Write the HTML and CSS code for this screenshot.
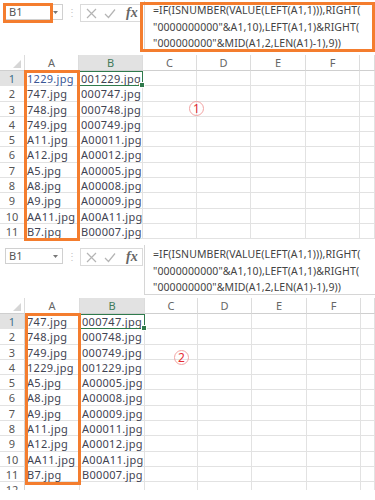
FILE: index.html
```html
<!DOCTYPE html>
<html>
<head>
<meta charset="utf-8">
<link rel="stylesheet" href="styles.css">
</head>
<body>
<div class="panel panel-a">
  <div class="toolbar">
    <div class="namebox"><span>B1</span><svg class="arrow" width="5" height="3" viewBox="0 0 5 3"><path d="M0 0h5L2.5 3z" fill="#777"/></svg></div>
    <div class="dots">⋮</div>
    <div class="btns">
      <svg width="11" height="11" viewBox="0 0 11 11"><path d="M1 1L10 10M10 1L1 10" stroke="#b4b4b4" stroke-width="1.2" fill="none"/></svg>
      <svg width="12" height="11" viewBox="0 0 12 11"><path d="M1 6L4.5 9.5L11 1.5" stroke="#b4b4b4" stroke-width="1.2" fill="none"/></svg>
      <span class="fx">fx</span>
    </div>
    <div class="formula">
      <div>=IF(ISNUMBER(VALUE(LEFT(A1,1))),RIGHT(</div>
      <div>"0000000000"&amp;A1,10),LEFT(A1,1)&amp;RIGHT(</div>
      <div>"000000000"&amp;MID(A1,2,LEN(A1)-1),9))</div>
    </div>
  </div>
  <div class="sheet">
    <div class="ch corner"><svg width="8" height="8" viewBox="0 0 8 8"><path d="M8 0V8H0z" fill="#d6d6d6"/></svg></div><div class="ch">A</div><div class="ch on">B</div><div class="ch">C</div><div class="ch">D</div><div class="ch">E</div><div class="ch">F</div><div class="ch"></div>
    <div class="rh on">1</div><div class="c blue">1229.jpg</div><div class="c sel">001229.jpg</div><div class="c"></div><div class="c"></div><div class="c"></div><div class="c"></div><div class="c"></div>
    <div class="rh">2</div><div class="c">747.jpg</div><div class="c">000747.jpg</div><div class="c"></div><div class="c"></div><div class="c"></div><div class="c"></div><div class="c"></div>
    <div class="rh">3</div><div class="c">748.jpg</div><div class="c">000748.jpg</div><div class="c"></div><div class="c"></div><div class="c"></div><div class="c"></div><div class="c"></div>
    <div class="rh">4</div><div class="c">749.jpg</div><div class="c">000749.jpg</div><div class="c"></div><div class="c"></div><div class="c"></div><div class="c"></div><div class="c"></div>
    <div class="rh">5</div><div class="c">A11.jpg</div><div class="c">A00011.jpg</div><div class="c"></div><div class="c"></div><div class="c"></div><div class="c"></div><div class="c"></div>
    <div class="rh">6</div><div class="c">A12.jpg</div><div class="c">A00012.jpg</div><div class="c"></div><div class="c"></div><div class="c"></div><div class="c"></div><div class="c"></div>
    <div class="rh">7</div><div class="c">A5.jpg</div><div class="c">A00005.jpg</div><div class="c"></div><div class="c"></div><div class="c"></div><div class="c"></div><div class="c"></div>
    <div class="rh">8</div><div class="c">A8.jpg</div><div class="c">A00008.jpg</div><div class="c"></div><div class="c"></div><div class="c"></div><div class="c"></div><div class="c"></div>
    <div class="rh">9</div><div class="c">A9.jpg</div><div class="c">A00009.jpg</div><div class="c"></div><div class="c"></div><div class="c"></div><div class="c"></div><div class="c"></div>
    <div class="rh">10</div><div class="c">AA11.jpg</div><div class="c">A00A11.jpg</div><div class="c"></div><div class="c"></div><div class="c"></div><div class="c"></div><div class="c"></div>
    <div class="rh">11</div><div class="c">B7.jpg</div><div class="c">B00007.jpg</div><div class="c"></div><div class="c"></div><div class="c"></div><div class="c"></div><div class="c"></div>
  </div>
  <div class="mark mark-name"></div>
  <div class="mark mark-formula"></div>
  <div class="mark mark-col-a1"></div>
  <div class="circ circ-1">1</div>
</div>

<div class="panel panel-b">
  <div class="toolbar">
    <div class="namebox"><span>B1</span><svg class="arrow" width="5" height="3" viewBox="0 0 5 3"><path d="M0 0h5L2.5 3z" fill="#777"/></svg></div>
    <div class="dots">⋮</div>
    <div class="btns">
      <svg width="11" height="11" viewBox="0 0 11 11"><path d="M1 1L10 10M10 1L1 10" stroke="#b4b4b4" stroke-width="1.2" fill="none"/></svg>
      <svg width="12" height="11" viewBox="0 0 12 11"><path d="M1 6L4.5 9.5L11 1.5" stroke="#b4b4b4" stroke-width="1.2" fill="none"/></svg>
      <span class="fx">fx</span>
    </div>
    <div class="formula">
      <div>=IF(ISNUMBER(VALUE(LEFT(A1,1))),RIGHT(</div>
      <div>"0000000000"&amp;A1,10),LEFT(A1,1)&amp;RIGHT(</div>
      <div>"000000000"&amp;MID(A1,2,LEN(A1)-1),9))</div>
    </div>
  </div>
  <div class="sheet sheet-b">
    <div class="ch corner"><svg width="8" height="8" viewBox="0 0 8 8"><path d="M8 0V8H0z" fill="#d6d6d6"/></svg></div><div class="ch">A</div><div class="ch on">B</div><div class="ch">C</div><div class="ch">D</div><div class="ch">E</div><div class="ch">F</div><div class="ch"></div>
    <div class="rh on">1</div><div class="c">747.jpg</div><div class="c sel">000747.jpg</div><div class="c"></div><div class="c"></div><div class="c"></div><div class="c"></div><div class="c"></div>
    <div class="rh">2</div><div class="c">748.jpg</div><div class="c">000748.jpg</div><div class="c"></div><div class="c"></div><div class="c"></div><div class="c"></div><div class="c"></div>
    <div class="rh">3</div><div class="c">749.jpg</div><div class="c">000749.jpg</div><div class="c"></div><div class="c"></div><div class="c"></div><div class="c"></div><div class="c"></div>
    <div class="rh">4</div><div class="c">1229.jpg</div><div class="c">001229.jpg</div><div class="c"></div><div class="c"></div><div class="c"></div><div class="c"></div><div class="c"></div>
    <div class="rh">5</div><div class="c">A5.jpg</div><div class="c">A00005.jpg</div><div class="c"></div><div class="c"></div><div class="c"></div><div class="c"></div><div class="c"></div>
    <div class="rh">6</div><div class="c">A8.jpg</div><div class="c">A00008.jpg</div><div class="c"></div><div class="c"></div><div class="c"></div><div class="c"></div><div class="c"></div>
    <div class="rh">7</div><div class="c">A9.jpg</div><div class="c">A00009.jpg</div><div class="c"></div><div class="c"></div><div class="c"></div><div class="c"></div><div class="c"></div>
    <div class="rh">8</div><div class="c">A11.jpg</div><div class="c">A00011.jpg</div><div class="c"></div><div class="c"></div><div class="c"></div><div class="c"></div><div class="c"></div>
    <div class="rh">9</div><div class="c">A12.jpg</div><div class="c">A00012.jpg</div><div class="c"></div><div class="c"></div><div class="c"></div><div class="c"></div><div class="c"></div>
    <div class="rh">10</div><div class="c">AA11.jpg</div><div class="c">A00A11.jpg</div><div class="c"></div><div class="c"></div><div class="c"></div><div class="c"></div><div class="c"></div>
    <div class="rh">11</div><div class="c">B7.jpg</div><div class="c">B00007.jpg</div><div class="c"></div><div class="c"></div><div class="c"></div><div class="c"></div><div class="c"></div>
    <div class="rh">12</div><div class="c"></div><div class="c"></div><div class="c"></div><div class="c"></div><div class="c"></div><div class="c"></div><div class="c"></div>
  </div>
  <div class="mark mark-col-a2"></div>
  <div class="circ circ-2">2</div>
</div>
</body>
</html>
```

FILE: styles.css
```css
* { box-sizing: border-box; }
html, body { margin: 0; padding: 0; background: #fff; }
body {
  width: 375px;
  height: 500px;
  overflow: hidden;
  font-family: "Noto Sans", "Open Sans", sans-serif;
  font-size: 11px;
  color: #444;
}
.panel { position: relative; overflow: hidden; }
.panel-a { height: 241px; }
.panel-b { height: 249px; }

.toolbar {
  display: flex;
  align-items: flex-start;
  height: 55px;
  padding-top: 1px;
}
.panel-b .toolbar { height: 57px; padding-top: 4px; }

.namebox {
  margin: 3px 0 0 5px;
  width: 58px;
  height: 16px;
  border: 1px solid #d0d0d0;
  display: flex;
  align-items: center;
  justify-content: space-between;
  padding: 0 4px 0 3px;
  color: #555;
  font-size: 11px;
  line-height: 14px;
}
.arrow { display: block; }
.dots {
  width: 17px;
  text-align: center;
  margin-top: 4px;
  color: #c4c4c4;
  font-size: 10px;
  line-height: 14px;
}
.btns {
  margin-top: 3px;
  width: 63px;
  height: 18px;
  border: 1px solid #dadada;
  display: flex;
  align-items: center;
  gap: 7px;
  padding-left: 5px;
}
.btns svg { display: block; }
.fx {
  font-family: "Liberation Serif", serif;
  font-style: italic;
  font-weight: bold;
  font-size: 14px;
  color: #666;
  margin-left: 3px;
  line-height: 14px;
}
.formula {
  flex: 1;
  height: 50px;
  margin-left: 1px;
  border-left: 1px solid #d6d6d6;
  border-bottom: 1px solid #d6d6d6;
  padding: 1px 0 0 8px;
  font-size: 10.5px;
  letter-spacing: 0.1px;
  line-height: 16.5px;
  color: #444;
  white-space: nowrap;
  overflow: hidden;
}

.sheet {
  display: grid;
  grid-template-columns: 25px 54px 64px 54px 54px 55px 54px 1fr;
  grid-template-rows: 16px repeat(11, 15.3px);
}
.sheet-b {
  grid-template-columns: 25px 55px 65px 53px 54px 55px 54px 1fr;
  grid-template-rows: 16px repeat(12, 15.3px);
}
.ch {
  border-right: 1px solid #dcdcdc;
  border-bottom: 1px solid #cfcfcf;
  text-align: center;
  color: #666;
  font-size: 11px;
  line-height: 15px;
}
.ch.on { background: #e2e2e2; color: #3f7a5a; }
.corner { display: flex; align-items: flex-end; justify-content: flex-end; padding: 0 3px 2px 0; }
.corner svg { display: block; }
.rh {
  border-right: 1px solid #d4d4d4;
  border-bottom: 1px solid #e2e2e2;
  text-align: center;
  color: #555;
  font-size: 11px;
  line-height: 15px;
}
.rh.on { background: #e2e2e2; color: #3f6f8a; }
.c {
  border-right: 1px solid #e2e2e2;
  border-bottom: 1px solid #e2e2e2;
  padding-left: 2px;
  line-height: 15px;
  letter-spacing: 0.3px;
  white-space: nowrap;
  overflow: visible;
  color: #3f4352;
}
.c.blue { color: #3a5796; }
.c.sel {
  position: relative;
  outline: 1.5px solid #2f7a4c;
  outline-offset: -1px;
}
.c.sel::after {
  content: "";
  position: absolute;
  right: -3px;
  bottom: -3px;
  width: 4px;
  height: 4px;
  background: #2f7a4c;
  border: 1px solid #fff;
}

.mark {
  position: absolute;
  border: 3px solid #f47d2e;
  pointer-events: none;
}
.mark-name { left: 3px; top: 3px; width: 50px; height: 20px; }
.mark-formula { left: 140px; top: 2px; width: 235px; height: 50px; }
.mark-col-a1 { left: 24px; top: 70px; width: 56px; height: 171px; }
.mark-col-a2 { left: 25px; top: 72px; width: 56px; height: 172px; }

.circ {
  position: absolute;
  width: 15px;
  height: 15px;
  border: 1px solid #f2a3a3;
  border-radius: 50%;
  color: #e52b33;
  font-size: 12px;
  line-height: 13px;
  text-align: center;
}
.circ-1 { left: 189px; top: 101px; }
.circ-2 { left: 174px; top: 109px; }
```
